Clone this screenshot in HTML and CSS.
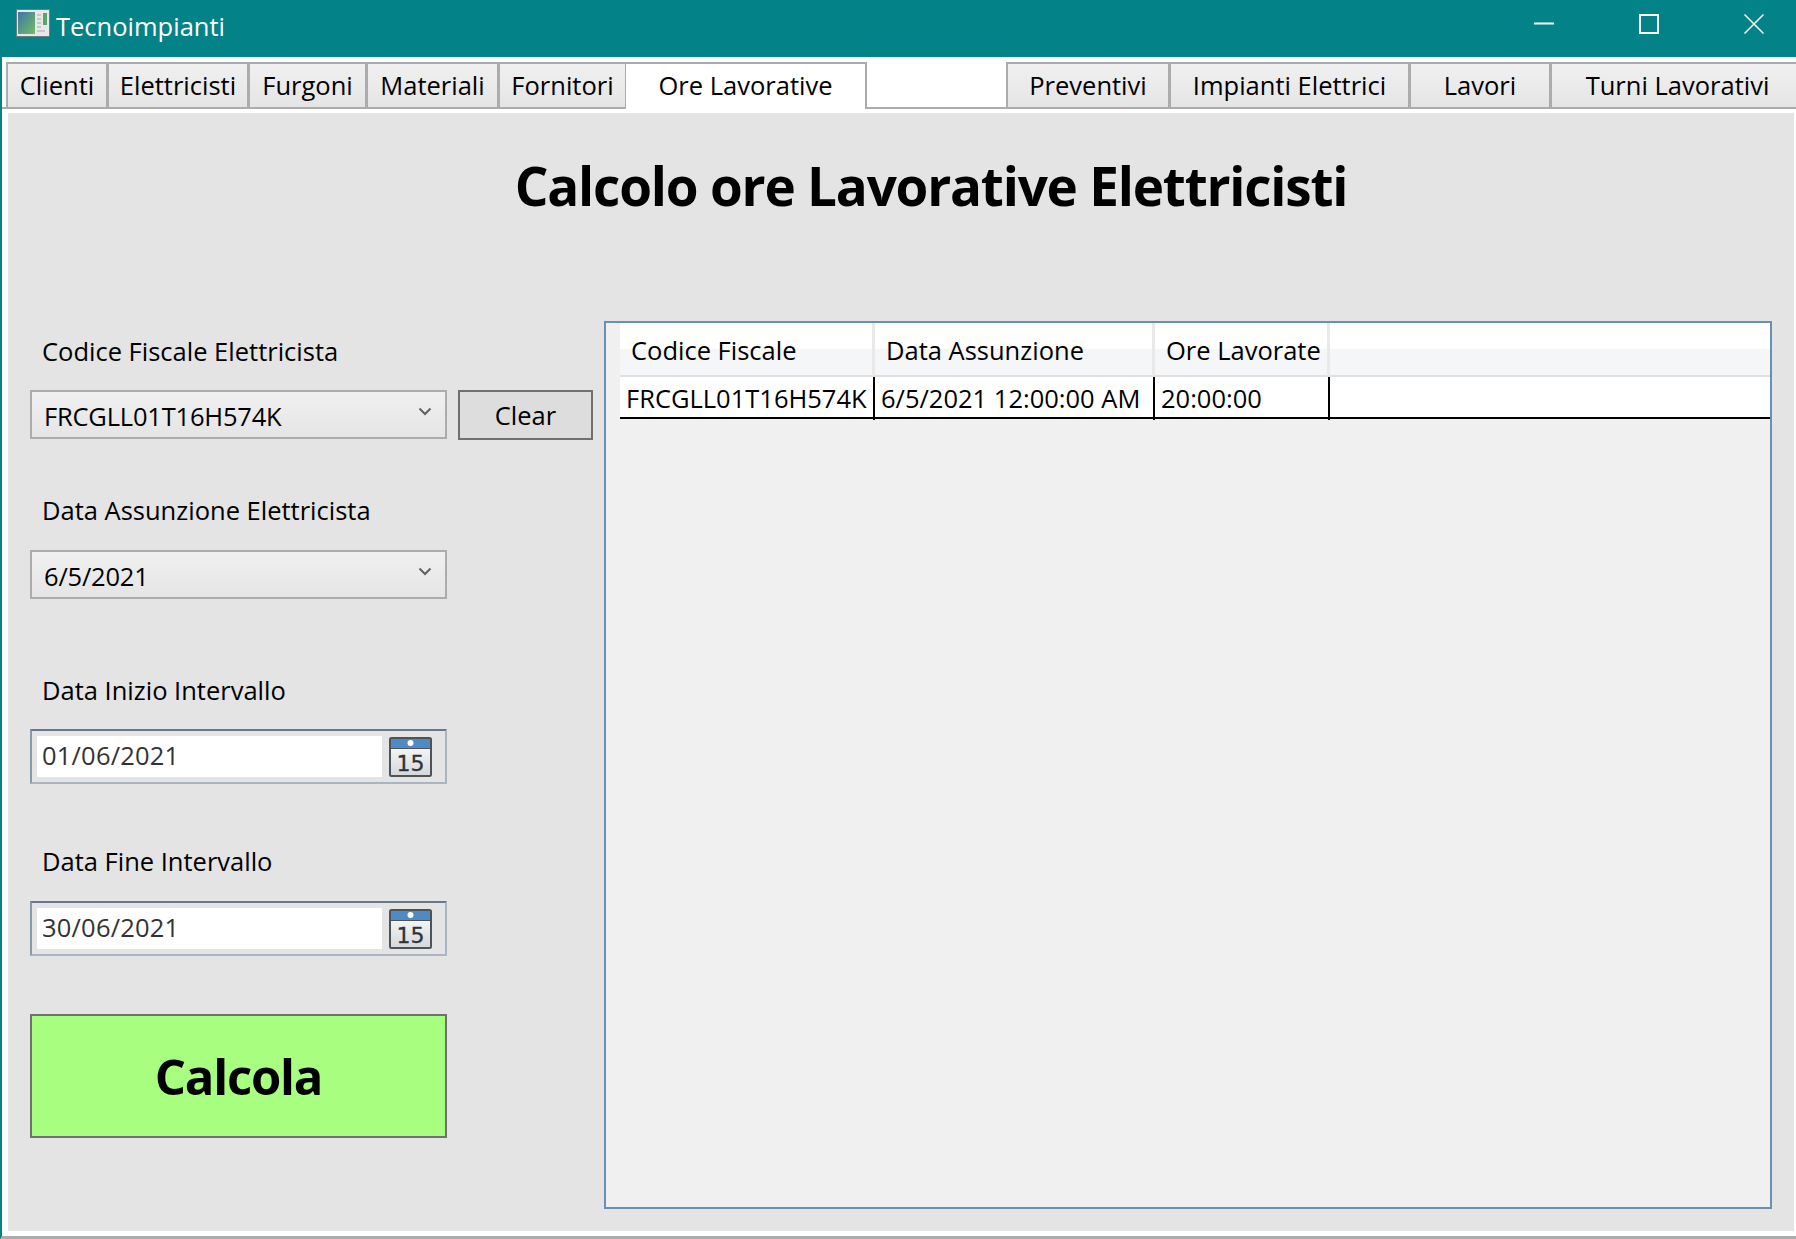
FILE: index.html
```html
<!DOCTYPE html>
<html lang="en">
<head>
  <meta charset="UTF-8">
  <title>Tecnoimpianti</title>
  <link rel="stylesheet" href="styles.css">
</head>
<body>

<div class="window">
  <div class="titlebar">
    <svg class="app-icon" width="34" height="28" viewBox="0 0 34 28">
      <defs>
        <linearGradient id="appPane" x1="0" y1="0" x2="1" y2="1">
          <stop offset="0" stop-color="#3f76a8"/>
          <stop offset="1" stop-color="#72bd62"/>
        </linearGradient>
      </defs>
      <rect x="0.5" y="0.5" width="33" height="27" fill="#e8e8e8" stroke="#6d7c80"/>
      <rect x="2" y="3" width="17" height="22" fill="url(#appPane)"/>
      <rect x="27" y="4" width="4" height="12" fill="#5aa56f"/>
      <path d="M21 6h4M21 10h4M21 14h4M21 18h4M21 22h8" stroke="#b9bfc0" stroke-width="1.5"/>
    </svg>
    <span class="app-name">Tecnoimpianti</span>
    <div class="controls">
      <svg width="20" height="20" viewBox="0 0 20 20"><path d="M0 9.5h20" stroke="#fff" stroke-width="2"/></svg>
      <svg width="20" height="20" viewBox="0 0 20 20"><rect x="1" y="1" width="18" height="18" fill="none" stroke="#fff" stroke-width="2"/></svg>
      <svg width="20" height="20" viewBox="0 0 20 20"><path d="M0.5 0.5l19 19M19.5 0.5l-19 19" stroke="#fff" stroke-width="1.5"/></svg>
    </div>
  </div>

  <div class="tabstrip">
    <div class="tabs tabs-left">
      <div class="tab">Clienti</div>
      <div class="tab">Elettricisti</div>
      <div class="tab">Furgoni</div>
      <div class="tab">Materiali</div>
      <div class="tab">Fornitori</div>
      <div class="tab active">Ore Lavorative</div>
    </div>
    <div class="tabs tabs-right">
      <div class="tab">Preventivi</div>
      <div class="tab">Impianti Elettrici</div>
      <div class="tab">Lavori</div>
      <div class="tab">Turni Lavorativi</div>
    </div>
  </div>

  <div class="content">
    <h1 class="heading">Calcolo ore Lavorative Elettricisti</h1>

    <div class="columns">
      <div class="form">
        <div class="label label-first">Codice Fiscale Elettricista</div>
        <div class="combo-row">
          <div class="combo">
            <span>FRCGLL01T16H574K</span>
            <svg width="14" height="9" viewBox="0 0 14 9"><path d="M1.5 1.5L7 7l5.5-5.5" fill="none" stroke="#606060" stroke-width="2"/></svg>
          </div>
          <button class="clear">Clear</button>
        </div>

        <div class="label label-assunzione">Data Assunzione Elettricista</div>
        <div class="combo">
          <span>6/5/2021</span>
          <svg width="14" height="9" viewBox="0 0 14 9"><path d="M1.5 1.5L7 7l5.5-5.5" fill="none" stroke="#606060" stroke-width="2"/></svg>
        </div>

        <div class="label label-inizio">Data Inizio Intervallo</div>
        <div class="datepicker">
          <div class="date-text">01/06/2021</div>
          <svg class="cal" width="43" height="40" viewBox="0 0 43 40">
            <defs>
              <linearGradient id="calBody" x1="0" y1="0" x2="0" y2="1">
                <stop offset="0" stop-color="#ffffff"/>
                <stop offset="1" stop-color="#d4d8da"/>
              </linearGradient>
            </defs>
            <rect x="1" y="1" width="41" height="38" rx="1.5" fill="url(#calBody)" stroke="#4c5459" stroke-width="2"/>
            <rect x="2" y="2" width="39" height="9" fill="#4f8ac4"/>
            <path d="M2 11.5h39" stroke="#4c5459"/>
            <circle cx="21.5" cy="6" r="3" fill="#fff"/>
            <text x="21.5" y="34" class="cal-num">15</text>
          </svg>
        </div>

        <div class="label label-fine">Data Fine Intervallo</div>
        <div class="datepicker">
          <div class="date-text">30/06/2021</div>
          <svg class="cal" width="43" height="40" viewBox="0 0 43 40">
            <rect x="1" y="1" width="41" height="38" rx="1.5" fill="url(#calBody)" stroke="#4c5459" stroke-width="2"/>
            <rect x="2" y="2" width="39" height="9" fill="#4f8ac4"/>
            <path d="M2 11.5h39" stroke="#4c5459"/>
            <circle cx="21.5" cy="6" r="3" fill="#fff"/>
            <text x="21.5" y="34" class="cal-num">15</text>
          </svg>
        </div>

        <button class="calcola">Calcola</button>
      </div>

      <div class="grid-panel">
        <div class="grid-row grid-head">
          <div class="head-cell">Codice Fiscale</div>
          <div class="head-cell">Data Assunzione</div>
          <div class="head-cell">Ore Lavorate</div>
          <div class="head-fill"></div>
        </div>
        <div class="grid-row grid-body">
          <div class="cell">FRCGLL01T16H574K</div>
          <div class="cell">6/5/2021 12:00:00 AM</div>
          <div class="cell">20:00:00</div>
          <div class="cell-fill"></div>
        </div>
      </div>
    </div>
  </div>
</div>

</body>
</html>
```

FILE: styles.css
```css
* {
  box-sizing: border-box;
}
html, body {
  margin: 0;
  padding: 0;
  background: #fff;
}
body {
  font-family: "Open Sans", sans-serif;
  font-size: 25.5px;
  color: #000;
}
.window {
  width: 1796px;
  height: 1239px;
  overflow: hidden;
  border-left: 2px solid #038287;
  border-bottom: 3px solid #acacac;
  display: flex;
  flex-direction: column;
}

/* title bar */
.titlebar {
  height: 57px;
  margin-left: -2px;
  background: #038287;
  color: #fff;
  display: flex;
  align-items: center;
}
.app-icon {
  margin-left: 16px;
  margin-top: -11px;
}
.app-name {
  margin-left: 6px;
  margin-top: -6px;
}
.controls {
  margin-left: auto;
  margin-top: -9px;
  padding-right: 32px;
  display: flex;
  gap: 85px;
}

/* tabs */
.tabstrip {
  height: 47px;
  margin-top: 5px;
  display: flex;
  justify-content: space-between;
  align-items: flex-start;
  border-bottom: 2px solid #acacac;
  padding-left: 4px;
}
.tabs {
  display: grid;
  height: 45px;
}
.tabs-left {
  grid-template-columns: 101px 141px 118px 132px 128px 241px;
}
.tabs-right {
  grid-template-columns: 163px 240px 141px 254px;
  margin-right: -8px;
}
.tab {
  height: 45px;
  padding-bottom: 2px;
  border: 2px solid #acacac;
  border-right-width: 1px;
  border-bottom: 0;
  background: linear-gradient(#f0f0f0, #e5e5e5);
  display: flex;
  align-items: center;
  justify-content: center;
}
.tab.active {
  height: 47px;
  background: #fff;
  border-right-width: 2px;
  border-left-width: 0;
  padding-bottom: 4px;
}

/* main area */
.content {
  flex: 1;
  margin: 4px 2px 5px 6px;
  background: #e4e4e4;
  display: flex;
  flex-direction: column;
}
.heading {
  margin: 0;
  height: 208px;
  padding: 37px 0 0 60px;
  font-size: 53px;
  line-height: 72px;
  font-weight: 700;
  letter-spacing: -1.2px;
  text-align: center;
}
.columns {
  flex: 1;
  display: flex;
  padding: 0 22px 22px 22px;
}

/* left form */
.form {
  width: 574px;
  flex: none;
}
.label {
  height: 36px;
  line-height: 36px;
  padding-left: 12px;
}
.label-first {
  margin-top: 12px;
  margin-bottom: 21px;
}
.label-assunzione {
  margin-top: 52px;
  margin-bottom: 22px;
}
.label-inizio {
  margin-top: 73px;
  margin-bottom: 21px;
}
.label-fine {
  margin-top: 59px;
  margin-bottom: 22px;
}
.combo-row {
  display: flex;
  gap: 11px;
}
.combo {
  width: 417px;
  height: 49px;
  border: 2px solid #acacac;
  background: linear-gradient(#f0f0f0, #e5e5e5);
  display: flex;
  align-items: center;
  justify-content: space-between;
  padding: 0 13px 0 12px;
}
.combo span {
  margin-top: 2px;
  letter-spacing: -0.2px;
}
.combo svg {
  margin-top: -6px;
}
.clear {
  width: 135px;
  height: 50px;
  border: 2px solid #707070;
  background: #dddddd;
  font: inherit;
  color: #000;
  padding: 0;
}
.datepicker {
  width: 417px;
  height: 55px;
  border: 2px solid;
  border-color: #66788a #a9b6c2 #a9b6c2 #8a99a8;
  background: #e4e4e4;
  display: flex;
  align-items: center;
  padding: 0 13px 0 5px;
  justify-content: space-between;
}
.date-text {
  width: 345px;
  height: 41px;
  line-height: 39px;
  background: #fff;
  padding-left: 5px;
  letter-spacing: 0.2px;
  color: #333;
}
.cal-num {
  font-family: "DejaVu Sans", sans-serif;
  font-size: 22px;
  text-anchor: middle;
  fill: #2c3439;
  stroke: #2c3439;
  stroke-width: 0.3px;
}
.calcola {
  display: block;
  width: 417px;
  height: 124px;
  margin-top: 58px;
  border: 2px solid #707070;
  background: #a8ff7f;
  font-family: inherit;
  font-size: 49px;
  font-weight: 700;
  letter-spacing: -1.2px;
  color: #000;
  padding: 0;
}

/* data grid */
.grid-panel {
  flex: 1;
  border: 2px solid #6a8fb5;
  background: #f0f0f0;
}
.grid-row {
  display: grid;
  grid-template-columns: 255px 280px 175px 1fr;
  margin-left: 14px;
}
.grid-head {
  height: 54px;
  border-bottom: 2px solid #e0e0e0;
  background: linear-gradient(#ffffff 0, #ffffff 50%, #f5f6f7 50%, #f5f6f7 100%);
}
.head-cell {
  border-right: 3px solid #e9e9e9;
  padding: 1px 0 0 11px;
  line-height: 52px;
}
.grid-body {
  height: 42px;
  background: #fff;
  border-bottom: 2px solid #000;
}
.cell {
  border-right: 2px solid #000;
  padding-left: 6px;
  line-height: 43px;
  white-space: nowrap;
}
```
